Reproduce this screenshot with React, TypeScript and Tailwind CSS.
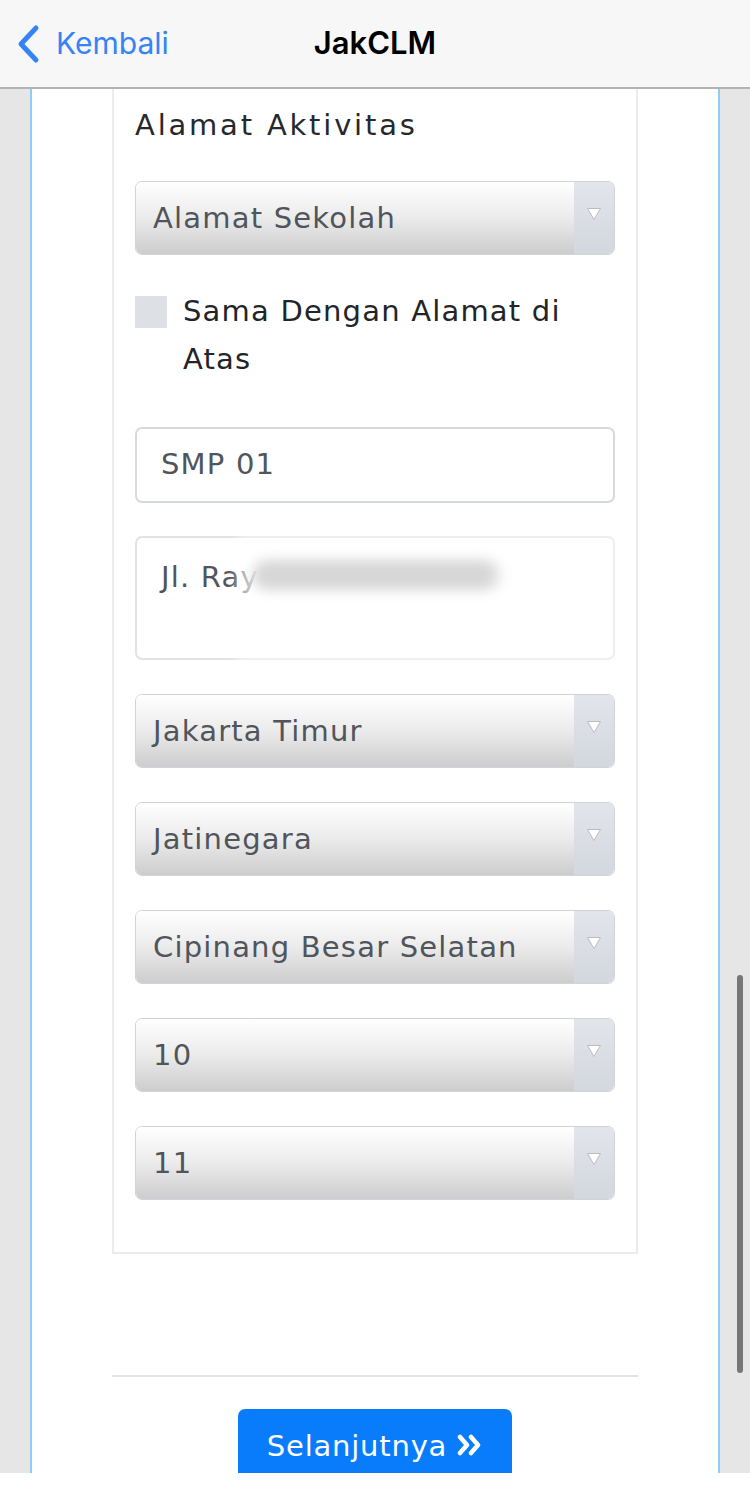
import React from "react";

const font = { fontFamily: "'DejaVu Sans', 'Open Sans', sans-serif" };

function Select({ label }: { label: string }) {
  return (
    <div className="flex h-[74px] w-full overflow-hidden rounded-[7px] border border-[#cfd3da]">
      <div className="flex flex-1 items-center bg-gradient-to-b from-[#ffffff] via-[#ebebeb] to-[#cdcdcd] pl-[17px] pt-[1px] text-[29px] tracking-[1.2px] text-[#50555b]">
        {label}
      </div>
      <div className="flex w-[40px] items-start justify-center bg-gradient-to-b from-[#e2e5ea] to-[#d3d7de] pt-[25px]">
        <svg width="16" height="14" viewBox="0 0 16 14">
          <polygon points="1.5,1.5 14.5,1.5 8,12.5" fill="#ffffff" stroke="#b9bcc2" strokeWidth="1" />
        </svg>
      </div>
    </div>
  );
}

export default function App() {
  return (
    <div className="relative h-[1485px] w-[750px] overflow-hidden bg-white" style={font}>
      {/* Nav bar */}
      <div className="relative flex h-[89px] items-center border-b-2 border-[#b3b3b3] bg-[#f7f7f7]">
        <div className="flex items-center pl-[14px] text-[#3683f5]">
          <svg width="28" height="40" viewBox="0 0 28 40">
            <path d="M22 4 L7 20 L22 36" fill="none" stroke="#3683f5" strokeWidth="5" strokeLinecap="round" strokeLinejoin="round" />
          </svg>
          <span className="ml-[14px] text-[30px]" style={{ fontFamily: "Inter, 'Liberation Sans', sans-serif" }}>Kembali</span>
        </div>
        <div className="absolute left-0 right-0 top-0 flex h-[87px] items-center justify-center">
          <span className="text-[31px] font-semibold text-black" style={{ fontFamily: "Inter, 'Liberation Sans', sans-serif" }}>JakCLM</span>
        </div>
      </div>

      {/* Body */}
      <div className="flex h-[1384px] overflow-hidden bg-[#e6e6e6]">
        <div className="w-[30px]" />
        <div className="flex h-full w-[690px] flex-col overflow-hidden border-x-2 border-[#8ecdf4] bg-white px-[80px]">
          <div className="flex flex-col border-x-2 border-b-2 border-[#ececec] px-[21px] pb-[52px] pt-[16px]">
            <div className="h-[40px] text-[29px] leading-[40px] tracking-[2.8px] text-[#26282b]">Alamat Aktivitas</div>
            <div className="mt-[36px]">
              <Select label="Alamat Sekolah" />
            </div>
            <div className="mt-[32px] flex items-start">
              <div className="mt-[9px] h-[32px] w-[32px] shrink-0 bg-[#dde0e5]" />
              <div className="ml-[16px] text-[29px] leading-[48px] tracking-[1.2px] text-[#222428]">
                Sama Dengan Alamat di
                <br />
                Atas
              </div>
            </div>
            <div className="mt-[44px] flex h-[76px] shrink-0 items-center rounded-[7px] border-2 border-[#d6d9de] pl-[24px] text-[29px] tracking-[1.2px] text-[#50555b]">
              SMP 01
            </div>
            <div className="relative mt-[33px] h-[124px] shrink-0 rounded-[7px] border-2 border-[#e0e2e6] pl-[24px] pt-[18px] text-[29px] tracking-[1.2px] text-[#50555b]">
              <span>Jl. Ray</span>
              <span className="absolute left-[115px] top-[22px] h-[30px] w-[250px] rounded-full bg-[#d4d4d4] blur-[7px]" />
              <span className="absolute left-[100px] right-[-4px] top-[-4px] h-[130px] bg-white/60 blur-[6px]" />
              <span className="absolute left-[118px] top-[24px] h-[26px] w-[240px] rounded-full bg-[#d6d6d6] blur-[6px]" />
            </div>
            <div className="mt-[34px] flex flex-col gap-[34px]">
              <Select label="Jakarta Timur" />
              <Select label="Jatinegara" />
              <Select label="Cipinang Besar Selatan" />
              <Select label="10" />
              <Select label="11" />
            </div>
          </div>
          <div className="mt-[121px] h-[2px] shrink-0 bg-[#e3e3e3]" />
          <div className="mt-[32px] flex justify-center">
            <div className="flex h-[80px] w-[274px] shrink-0 items-start justify-center rounded-[7px] bg-[#087cfb] pt-[16px] text-[29px] tracking-[0.8px] text-white">
              <span>Selanjutnya</span>
              <svg className="ml-[10px] mt-[9px]" width="26" height="22" viewBox="0 0 26 22">
                <path d="M3 3 L10 11 L3 19" fill="none" stroke="#ffffff" strokeWidth="4.5" strokeLinecap="round" strokeLinejoin="round" />
                <path d="M14 3 L21 11 L14 19" fill="none" stroke="#ffffff" strokeWidth="4.5" strokeLinecap="round" strokeLinejoin="round" />
              </svg>
            </div>
          </div>
        </div>
        <div className="w-[30px]" />
      </div>

      {/* Scrollbar */}
      <div className="absolute left-[737px] top-[975px] h-[398px] w-[6px] rounded-full bg-[#777777]" />
    </div>
  );
}
